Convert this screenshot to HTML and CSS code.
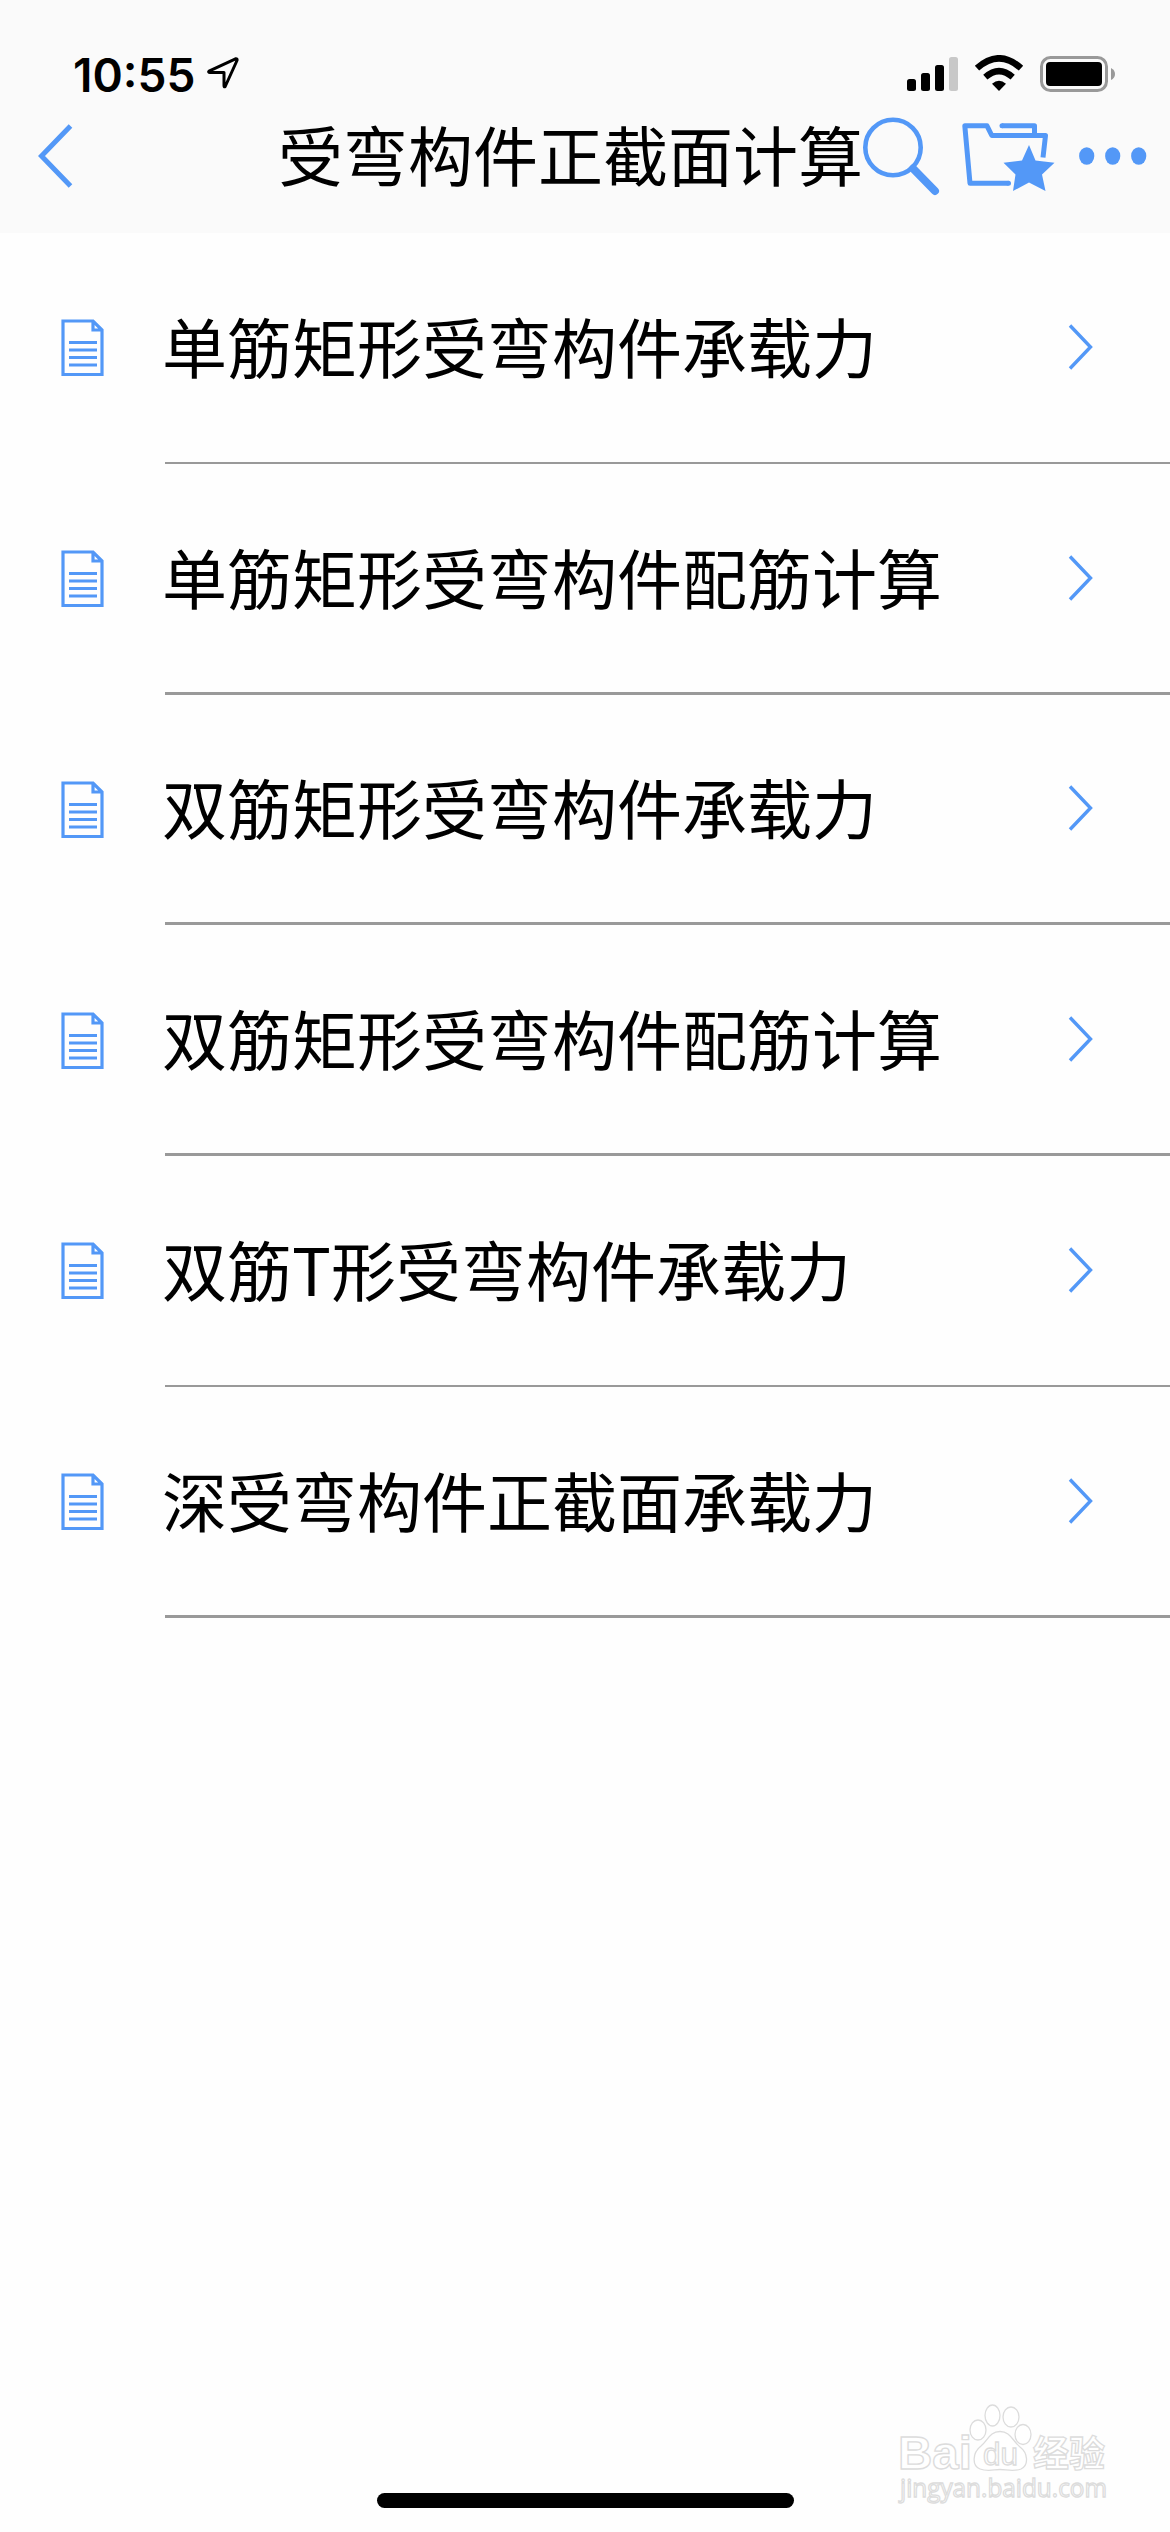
FILE: index.html
```html
<!DOCTYPE html>
<html lang="zh-CN">
<head>
    <meta charset="UTF-8">
    <meta name="viewport" content="width=device-width, initial-scale=1.0">
    <title>受弯构件正截面计算</title>
    <link rel="stylesheet" href="styles.css">
</head>
<body>

    <!-- Shared icons -->
    <svg class="sprite" width="0" height="0">
        <symbol id="icon-doc" viewBox="0 0 43 58">
            <path d="M2 2H32L41 11V55.5H2Z M32 2V11H41" fill="none" stroke="#5398f7" stroke-width="3.2"/>
            <path d="M8 23.5H36M8 31H36M8 38.5H36M8 46H36" stroke="#5398f7" stroke-width="3"/>
        </symbol>
        <symbol id="icon-arrow" viewBox="0 0 26 46">
            <path d="M2 1.5L22.5 23L2 44.5" fill="none" stroke="#5398f7" stroke-width="3.4"/>
        </symbol>
    </svg>

    <header class="header">
        <div class="status-bar">
            <span class="time">10:55</span>
            <svg class="location" width="32" height="32" viewBox="0 0 32 32">
                <path d="M2 14.2L28.5 1.8Q30.5 1.5 30 3.5L18.2 29.5Q17 30.5 17 28.5V15.5H3Q1 15.3 2 14.2Z" fill="none" stroke="#000" stroke-width="3" stroke-linejoin="round"/>
            </svg>
            <svg class="signal" width="51" height="34" viewBox="0 0 51 34">
                <rect x="0" y="22" width="9" height="12" rx="2.5"/>
                <rect x="14" y="16" width="9" height="18" rx="2.5"/>
                <rect x="28" y="8" width="9" height="26" rx="2.5"/>
                <rect x="42" y="0" width="9" height="34" rx="2.5" fill="#c8c8c8"/>
            </svg>
            <svg class="wifi" width="50" height="36" viewBox="0 0 50 36">
                <path d="M25 36L18 28.8Q25 22.5 32 28.8Z"/>
                <path d="M11.3 22.2Q25 10 38.7 22.2" fill="none" stroke="#000" stroke-width="6.3"/>
                <path d="M3 13.2Q25 -6.5 47 13.2" fill="none" stroke="#000" stroke-width="6.5"/>
            </svg>
            <svg class="battery" width="75" height="36" viewBox="0 0 75 36">
                <rect x="1.5" y="1.5" width="65" height="33" rx="9" fill="none" stroke="#999" stroke-width="3"/>
                <rect x="6" y="6" width="56" height="24" rx="4"/>
                <path d="M71 12Q75 14 75 18T71 24Z" fill="#999"/>
            </svg>
        </div>
        <nav class="nav-bar">
            <svg class="back" width="36" height="64" viewBox="0 0 36 64">
                <path d="M32.5 2L3.5 32L32.5 62" fill="none" stroke="#5398f7" stroke-width="5"/>
            </svg>
            <h1 class="title">受弯构件正截面计算</h1>
            <svg class="search" width="77" height="79" viewBox="0 0 77 79">
                <circle cx="30" cy="30.5" r="27.7" fill="none" stroke="#5398f7" stroke-width="4.6"/>
                <path d="M50 51.5L72 74" stroke="#5398f7" stroke-width="8" stroke-linecap="round"/>
            </svg>
            <svg class="favorite" width="93" height="70" viewBox="0 0 93 70">
                <path d="M46.5 62.2H8L2.8 4.8H25L29.8 14.5H83.5L81 36.5M40 4.8H72.5V14" fill="none" stroke="#5398f7" stroke-width="5" stroke-linejoin="round"/>
                <circle cx="46.5" cy="62.2" r="2.5" fill="#5398f7"/>
                <circle cx="40" cy="4.8" r="2.5" fill="#5398f7"/>
                <path d="M67 24L73.5 39.5L92.5 41.8L80 53.5L83.5 70L67 61.5L51 70L53.5 53.5L41.5 41.8L60 39.5Z" fill="#5398f7"/>
            </svg>
            <svg class="more" width="68" height="18" viewBox="0 0 68 18">
                <g fill="#5398f7">
                    <ellipse cx="7.7" cy="9" rx="7.6" ry="8.7"/>
                    <ellipse cx="33.7" cy="9" rx="7.6" ry="8.7"/>
                    <ellipse cx="59.7" cy="9" rx="7.6" ry="8.7"/>
                </g>
            </svg>
        </nav>
    </header>

    <main class="list">
        <div class="row">
            <svg class="doc"><use href="#icon-doc"/></svg>
            <div class="row-body thin">
                <span class="label">单筋矩形受弯构件承载力</span>
                <svg class="arrow"><use href="#icon-arrow"/></svg>
            </div>
        </div>
        <div class="row">
            <svg class="doc"><use href="#icon-doc"/></svg>
            <div class="row-body">
                <span class="label">单筋矩形受弯构件配筋计算</span>
                <svg class="arrow"><use href="#icon-arrow"/></svg>
            </div>
        </div>
        <div class="row">
            <svg class="doc"><use href="#icon-doc"/></svg>
            <div class="row-body">
                <span class="label">双筋矩形受弯构件承载力</span>
                <svg class="arrow"><use href="#icon-arrow"/></svg>
            </div>
        </div>
        <div class="row">
            <svg class="doc"><use href="#icon-doc"/></svg>
            <div class="row-body">
                <span class="label">双筋矩形受弯构件配筋计算</span>
                <svg class="arrow"><use href="#icon-arrow"/></svg>
            </div>
        </div>
        <div class="row">
            <svg class="doc"><use href="#icon-doc"/></svg>
            <div class="row-body thin">
                <span class="label">双筋T形受弯构件承载力</span>
                <svg class="arrow"><use href="#icon-arrow"/></svg>
            </div>
        </div>
        <div class="row">
            <svg class="doc"><use href="#icon-doc"/></svg>
            <div class="row-body">
                <span class="label">深受弯构件正截面承载力</span>
                <svg class="arrow"><use href="#icon-arrow"/></svg>
            </div>
        </div>
    </main>

    <footer class="footer">
        <!-- Watermark -->
        <svg class="watermark" width="220" height="106" viewBox="0 0 220 106">
            <g fill="#fff" stroke="#dcdcdc" stroke-width="1.3">
                <ellipse cx="14.5" cy="0" rx="0" ry="0"/>
                <ellipse cx="82" cy="30" rx="8" ry="10"/>
                <ellipse cx="96.500" cy="15.500" rx="7.5" ry="10.500"/>
                <ellipse cx="115" cy="17" rx="8" ry="10"/>
                <ellipse cx="127" cy="34.500" rx="8" ry="10"/>
                <path d="M104 31.500C94 31.500 92 40 85 46C76 53 76 66 84 69C92 72 98 69.500 104 69.500S118 72 125 69C133 65 132 53 124 47C116 40 114 31.500 104 31.500Z"/>
                <text class="wm-logo" x="2" y="69" textLength="74" lengthAdjust="spacingAndGlyphs">Bai</text>
                <text class="wm-du" x="87" y="65" textLength="35" lengthAdjust="spacingAndGlyphs">du</text>
                <text class="wm-cn" x="137" y="67" textLength="72">经验</text>
                <text class="wm-url" x="4" y="97" textLength="207" lengthAdjust="spacingAndGlyphs">jingyan.baidu.com</text>
            </g>
        </svg>
        <div class="home-indicator"></div>
    </footer>

</body>
</html>
```
FILE: styles.css
```css
* {
    box-sizing: border-box;
}

body {
    margin: 0;
    height: 2532px;
    display: flex;
    flex-direction: column;
    background-color: #fefefe;
    color: #000;
    font-family: "Noto Sans CJK SC", sans-serif;
    overflow: hidden;
}

svg {
    display: block;
    flex: none;
}

.sprite {
    position: absolute;
}

/* Header */
.header {
    height: 233px;
    background-color: #fafafa;
}

.status-bar {
    height: 117px;
    padding: 57px 55px 0 73px;
    display: flex;
    align-items: flex-start;
}

.time {
    width: 134px;
    font-family: Inter, sans-serif;
    font-size: 46px;
    font-weight: 600;
    line-height: 36px;
    white-space: nowrap;
}

.location {
    margin-right: auto;
}

.wifi {
    margin: -2px 16px 0 16px;
}

.battery {
    margin-top: -1px;
}

.nav-bar {
    height: 78px;
    padding-left: 38px;
    display: flex;
    align-items: center;
}

.title {
    width: 585px;
    margin: -6px 0 0 204px;
    font-size: 65px;
    font-weight: 400;
    line-height: 78px;
    white-space: nowrap;
}

.favorite {
    margin-left: 22px;
}

.more {
    margin-left: 24px;
}

/* List */
.list {
    flex: 1;
}

.row {
    height: 230.75px;
    padding-left: 61px;
    display: flex;
    align-items: center;
}

.doc {
    width: 43px;
    height: 58px;
}

.row-body {
    flex: 1;
    height: 100%;
    margin-left: 61px;
    padding-right: 76px;
    display: flex;
    align-items: center;
    justify-content: space-between;
    border-bottom: 3px solid #999;
}

.thin {
    border-bottom-width: 2px;
}

.label {
    margin: -4px 0 0 -3px;
    font-size: 65px;
    line-height: 90px;
    white-space: nowrap;
}

.arrow {
    width: 26px;
    height: 46px;
}

/* Bottom */
.footer {
    display: flex;
    flex-direction: column;
    align-items: center;
}

.watermark {
    align-self: flex-end;
    margin-right: 54px;
}

.wm-logo {
    font-family: "Liberation Sans", sans-serif;
    font-size: 46px;
    font-weight: 700;
}

.wm-du {
    font-family: "Liberation Sans", sans-serif;
    font-size: 31px;
}

.wm-cn {
    font-size: 36px;
    font-weight: 700;
}

.wm-url {
    font-family: "Open Sans", sans-serif;
    font-size: 25px;
}

.home-indicator {
    width: 417px;
    height: 15px;
    margin: -13px 0 24px;
    border-radius: 8px;
    background-color: #000;
}
```
